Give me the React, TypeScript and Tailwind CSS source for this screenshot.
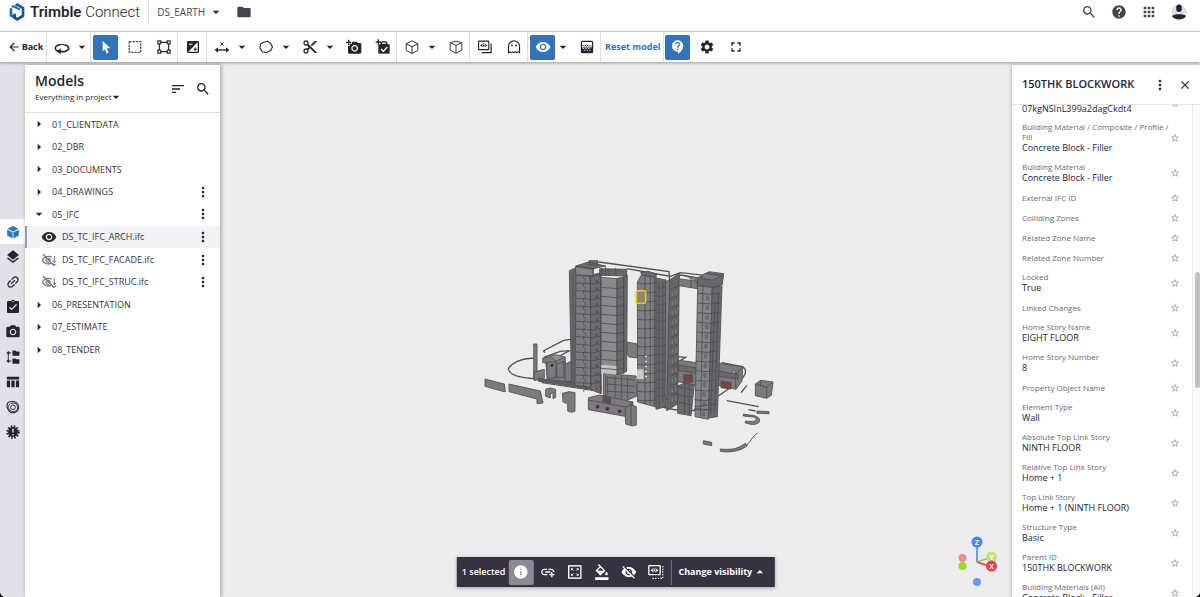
import type { ReactNode } from "react";
import {
  MdAddAPhoto,
  MdAddLink,
  MdApps,
  MdArrowBack,
  MdArrowDropDown,
  MdArrowDropUp,
  MdArrowRight,
  MdAssignmentTurnedIn,
  MdClose,
  MdContactSupport,
  MdContentCut,
  MdExposure,
  MdFolder,
  MdFormatColorFill,
  MdFullscreen,
  MdHelp,
  MdInfo,
  MdLayers,
  MdLink,
  MdMoreVert,
  MdPhotoCamera,
  MdSearch,
  MdSettings,
  MdSort,
  MdStarBorder,
  MdVisibility,
  MdVisibilityOff,
} from "react-icons/md";

/* ---------- custom icons ---------- */

type IconProps = { children: ReactNode; className?: string };

function Icon({ children, className = "size-3.5" }: IconProps) {
  return (
    <svg viewBox="0 0 24 24" className={className} fill="none" stroke="currentColor" strokeWidth={2} aria-hidden="true">
      {children}
    </svg>
  );
}

const OrbitIcon = () => (
  <Icon className="size-4">
    <path d="M9 19c-4-.5-7-2.400-7-5C2 10.500 6 9 9 8.500M17 9c3 .8 5 2.300 5 5 0 2.500-3 4.300-7 5H8" strokeWidth={2.400} />
    <path d="M10 14v9l-6-4.500z" fill="currentColor" stroke="none" />
    <path d="M8 8.600c3-.5 6-.5 10 .6" strokeWidth={1.600} />
  </Icon>
);

const PointerIcon = () => (
  <Icon className="size-4">
    <path d="M7 3l11.500 11h-5.300l2.800 6.300-3 1.300-2.700-6.400L7 18.500z" fill="currentColor" stroke="none" />
  </Icon>
);

const MarqueeIcon = () => (
  <Icon>
    <rect x="2" y="3" width="20" height="18" strokeDasharray="4 1.600" strokeWidth={1.800} />
  </Icon>
);

const FrameIcon = () => (
  <Icon>
    <path d="M6 4h12M6 20h12M4 6v12M20 6v12" />
    {[
      [1.5, 1.5],
      [17.5, 1.5],
      [1.5, 17.5],
      [17.5, 17.5],
    ].map(([x, y]) => (
      <rect key={`${x}-${y}`} x={x} y={y} width="5" height="5" fill="#fff" />
    ))}
  </Icon>
);

const MeasureIcon = () => (
  <Icon className="size-4">
    <path d="M3 16.500h18" />
    <path d="M6 12.500L1 16.500l5 4zM18 12.500l5 4-5 4z" fill="currentColor" stroke="none" />
    <path d="M9.800 5l4.400 5M14.200 5l-4.400 5" strokeWidth={1.500} />
  </Icon>
);

const MarkupIcon = () => (
  <Icon>
    <path d="M8 4l7-2 5 4 3 6-3 6-7 3.500-7-1L1.500 14 3 7z" strokeWidth={1.900} strokeLinejoin="round" />
  </Icon>
);

const AddTodoIcon = () => (
  <Icon className="size-4">
    <path d="M5 8h17v14H5z" fill="currentColor" stroke="none" />
    <path d="M9 8a4.500 4 0 0 1 9 0zM1 4.500h8M5 .5v8" />
    <path d="M9 15l3.500 3.500 6-6.500" stroke="#fff" />
  </Icon>
);

const CubeIcon = () => (
  <Icon>
    <path d="M12 1.500l10 5v11.500L12 23 2 18V6.500zM2 6.500l10 5 10-5M12 11.500V23" strokeWidth={1.600} strokeLinejoin="round" />
  </Icon>
);

const ClipBoxIcon = () => (
  <Icon>
    <path d="M2 4.500l10-2.500 10 2.500v13L12 22.500 2 17.500zM2 4.500L12 9l10-4.500M12 9v13.500" strokeWidth={1.500} strokeLinejoin="round" />
  </Icon>
);

const ViewsIcon = () => (
  <Icon>
    <rect x="1" y="2" width="17.500" height="14.500" rx="1" />
    <path d="M22.500 6v15.500H6" />
    <path d="M3.500 9.200Q9.800 2.500 16 9.200 9.800 16 3.500 9.200z" fill="currentColor" stroke="none" />
    <circle cx="9.800" cy="9.200" r="2.200" strokeWidth={1.400} stroke="#fff" />
  </Icon>
);

const GhostIcon = () => (
  <Icon>
    <path d="M2.500 22V11a9.500 9.500 0 0 1 19 0v11l-2.500-2-2.300 2-2.300-2-2.400 2-2.300-2-2.400 2-2.300-2z" strokeWidth={1.900} />
    <circle cx="8.500" cy="9.500" r="1.600" fill="currentColor" stroke="none" />
    <circle cx="15.500" cy="9.500" r="1.600" fill="currentColor" stroke="none" />
  </Icon>
);

const TransparencyIcon = () => (
  <Icon>
    <rect x="2.500" y="2.500" width="19" height="19" rx="1.500" strokeWidth={2.200} />
    <path d="M3 13h18v8H3z" fill="currentColor" stroke="none" />
    <path d="M4 9.500h16M6 12h14" strokeDasharray="2 2" strokeWidth={1.800} />
    <path d="M5 14.500h14M7 17.500h12" stroke="#fff" strokeDasharray="2 2.500" strokeWidth={1.600} />
  </Icon>
);

const SolidCubeIcon = () => (
  <Icon>
    <path d="M12 1.500l9.500 4.800L12 11 2.500 6.300zM2 8l9.300 4.600V23L2 18zM22 8l-9.300 4.600V23L22 18z" fill="currentColor" stroke="none" />
  </Icon>
);

const HierarchyIcon = () => (
  <Icon>
    <path d="M4 2v20M1 5h8M1 19h8" strokeWidth={1.500} />
    <path d="M11 1h5l1.500 1.500H23V10H11zM11 14.500h5l1.500 1.500H23v7.500H11zM4 2l2.500 3L4 8 1.500 5zM4 16l2.500 3L4 22l-2.500-3z" fill="currentColor" stroke="none" />
  </Icon>
);

const TableIcon = () => (
  <Icon>
    <path d="M1.500 3h21v4.500h-21zM1.500 9.500h5.500V21H1.500zM9.200 9.500h5.600V21H9.200zM17 9.500h5.500V21H17z" fill="currentColor" stroke="none" />
  </Icon>
);

const ExtensionsIcon = () => (
  <Icon>
    <path d="M3 5c3-3.500 11-3 15-.5 4 3 4.500 9 2 13.500-2.500 4-9 5-13 2.500C3 17.500 0 10 3 5z" />
    <path d="M5 9c2-4 9-5 12.500-2 3 3 3 9 0 11.500-3.500 2.500-9 1.500-11-1.500S3.500 12 5 9z" strokeWidth={1.500} />
    <circle cx="12" cy="12.500" r="4" strokeWidth={1.500} />
  </Icon>
);

const ClashIcon = () => (
  <Icon>
    <circle cx="12" cy="12" r="8.500" fill="currentColor" stroke="none" />
    <circle cx="12" cy="12" r="9.500" strokeWidth={4} strokeDasharray="2.600 2.374" />
    <path d="M12 6.500v6.500M12 15.500v2.500" stroke="#e0e1e9" strokeWidth={2.400} />
  </Icon>
);

const HiddenModelIcon = () => (
  <Icon className="size-4">
    <path d="M3 3l17 18" />
    <path d="M2 12c2-3.500 5-5.500 9-5.500 2 0 4 .6 5 1.500M2 12c2 4 5 6 9 6 2 0 3-.3 4-.8" />
    <path d="M8 10c-1.500 3 1 6 4 5.500M11 9l3.500 3.500" />
    <path d="M20 6v10M17.500 13l2.500 3 2.500-3M16.500 18.500h6.500" strokeWidth={1.500} />
  </Icon>
);

const FitIcon = () => (
  <Icon>
    <rect x="1.500" y="1.500" width="21" height="21" strokeWidth={2.400} />
    <path d="M5.500 9.500v-4h4zM14.500 5.500h4v4zM18.500 14.500v4h-4zM9.500 18.500h-4v-4z" fill="currentColor" stroke="none" />
    <path d="M7 7l2.500 2.500M17 7l-2.500 2.500M7 17l2.500-2.500M17 17l-2.500-2.500" strokeWidth={1.600} />
  </Icon>
);

const IsolateIcon = () => (
  <Icon className="size-4">
    <rect x="1.500" y="2.500" width="17" height="13.500" rx="1" />
    <path d="M22.500 3v18.500H6" strokeDasharray="2 2" />
    <path d="M4 9.200Q10 3.500 16 9.200 10 15.200 4 9.200z" fill="currentColor" stroke="none" />
    <circle cx="10" cy="9.300" r="2" strokeWidth={1.400} stroke="#353341" />
  </Icon>
);

function TrimbleMark() {
  return (
    <svg viewBox="0 0 48 54" className="h-[18px] w-4" fill="none" strokeWidth={8} aria-hidden="true">
      <path d="M6 16v21l9 5" stroke="#1d67b3" />
      <path d="M8 11l6-1 19 10" stroke="#1d67b3" strokeWidth={6} />
      <path d="M20 8l5-3 17 10v12" stroke="#0f60ab" />
      <path d="M42 27v11L25 49l-8-5V32" stroke="#154f91" />
    </svg>
  );
}

/* ---------- building model ---------- */

const EDGE = "#4b4c50";
const range = (n: number) => Array.from({ length: n }, (_, i) => i);

function BuildingModel() {
  return (
    <svg viewBox="0 0 930 630" className="h-[210px] w-[310px] shrink-0" role="img" aria-label="Building model">
      <g fill="none" stroke="#505154" strokeWidth={4}>
        <path d="M178 325c-35-3-70 15-78 32 4 22 55 30 82 28M286 268l-20 3-60 31 3 6M206 322l50-18 28-2-30 16M372 36l210 29 2 35M455 56l125 22M584 80l32-12 75 8M584 95l34-20 60 12" />
        <path d="M600 320l32 2-26 16M740 338l62 12c16 10 12 25-10 45M790 396l-60 42M816 406l-18 22M755 452l96 18M820 479l22 4M520 455c60 30 150 38 200 10" />
        <path d="M190 390l190 28M200 398l170 26M848 549c-16 8-20 30-44 44" strokeWidth={3} />
      </g>

      <g fill="#7b7b7e" stroke={EDGE} strokeWidth={2.500} strokeLinejoin="round">
        {/* low walls at the left */}
        <path d="M176 282h10v106h-10zM30 387l58 15 3 23-8-1-53-15zM102 402l94 21 8 36-18 2v-14l-84-22zM212 418l14-4 16 4v24l-8 4v-18l-8 4v12l-14-5zM262 430l20-5 18 3v56l-10 3-12-4v-22l-14-5z" />
        <path d="M203 325l38-9 30 7v20l30-15v75l-52-5-32-8-4-50-10-3z" />
        <path d="M216 336h27v48h-27zM245 343l22-9v48h-22zM270 343l27-11v62h-27zM178 366l30-8v26l-30 8z" />
        <path d="M225 318l16-4 30 7-28 12z" fill="#929294" />
        <circle cx="231" cy="346" r="4" fill="#252529" />
        <path d="M190 385l188 23v14l-188-28z" fill="#5f5f62" />

        {/* podium */}
        <path d="M385 370l98 8 3 60-34 15-67-10zM455 276l32 6v42l-25-3-7-10z" />
        <path d="M395 382l85 8M395 402l86 7M395 424l86 4M420 372v70M440 375v70M458 380v65M398 380v62" />
        <path d="M340 443l34-8 100 21v38l-18 6-116-21z" />
        <path d="M340 450l116 22 18-16M456 472v28" fill="none" />
        <path d="M450 474l18-10 16 6v55l-12 3-20-6z" />
        <path d="M468 464v62" />
        <path d="M384 439l22 3v18l-22-4z" fill="#774638" />
        <circle cx="368" cy="470" r="5" fill="#343438" />
        <circle cx="397" cy="476" r="5" fill="#343438" />
        <circle cx="434" cy="484" r="5" fill="#343438" />

        {/* right wing */}
        <path d="M606 330l60 8v70l-60-14zM725 338l78 13-2 42-18 25-62-14z" />
        <path d="M610 345l180 28v14l-180-25zM782 373l20-21M782 373v42" fill="#6a6a6e" />
        <path d="M626 374h26v23h-26zM738 393l30 5v19l-30-4z" fill="#774638" />
        <circle cx="777" cy="366" r="4" fill="#e9e9ea" />
        <path d="M841 402l16-11 37 5-5 40-14 9-34-8z" />
        <path d="M857 391v16l18 5 19-16M875 412v32M841 402l16 5" fill="none" />
        <path d="M685 572l25 5v10l-25-5zM736 597c40 4 55-3 75-17l6 7c-20 16-50 22-81 17zM846 483l36 2v6l-36-1zM805 492l18 3c25 1 36 12 29 22-12 10-25 7-42 1l2-5c30 5 38-4 25-12l-32-3z" />
      </g>

      {/* west tower */}
      <g fill="#7b7b7e" stroke={EDGE} strokeWidth={2.500} strokeLinejoin="round">
        <path d="M283 62l25-11v350l-19-5z" fill="#66666b" />
        <path d="M303 50l52 4v360l-55-9z" />
        <path d="M345 76l33-8v363l-30-12z" fill="#6c6c70" />
        <path d="M302 48l38-12 52 12-38 8zM342 32h27v14l-27-2z" fill="#6a6a6e" />
        <path d="M374 56l81 2v20l-81-2zM380 54v24M392 50v28M402 56v22M422 54v22" fill="#66666a" />
        <path d="M302 50l52 8v20l-52-4z" fill="#858587" />
        {range(15).map((i) => (
          <g key={i}>
            <path d={`M303 ${76 + i * 23}l52 3M355 ${79 + i * 23}l22-5`} />
            <path d={`M326 ${78 + i * 23}v8l6 3v7l-6 3v5`} fill="none" strokeWidth={2} />
            <path d={`M362 ${90 + i * 23}h6v8h-6z`} fill="#505055" stroke="none" />
          </g>
        ))}
        <path d="M294 70v326" stroke="#56566a" />
        <path d="M347 78v334M376 74v350" />
        <path d="M378 82l48 4v288l-48-32z" fill="#8a8a8c" />
        <path d="M426 86l20-6v290l-20 2zM446 82l11-6-2 288-9 4z" fill="#69696d" />
        <path d="M380 344l44 4v26l-44-5z" fill="#c4c4c5" stroke="none" />
        {range(10).map((i) => (
          <path key={i} d={`M378 ${112 + i * 27}l48 4 20-4`} fill="none" />
        ))}
        <path d="M378 372v60M392 376v64" />
      </g>

      {/* central tower */}
      <g fill="#7e7e81" stroke={EDGE} strokeWidth={2.500} strokeLinejoin="round">
        <path d="M487 96l16-28 40 3v400l-55-15z" />
        <path d="M497 68l22-4 27 8-8 10-36-6z" fill="#6b6b6f" />
        <path d="M543 84l30 6v380l-30 8z" fill="#68686c" />
        <path d="M572 96l13-8-7 364-8-10z" />
        <path d="M584 90l29-20-5 392-33 20z" fill="#66666a" />
        {range(14).map((i) => (
          <g key={i}>
            <path d={`M487 ${100 + i * 27}l24 2 32-3`} fill="none" />
            <path d={`M544 ${112 + i * 25}l12 3 16-5`} fill="none" strokeWidth={2} />
          </g>
        ))}
        {range(12).map((i) => (
          <g key={i}>
            <path d={`M584 ${118 + i * 29}l25-9`} />
            <path d={`M589 ${125 + i * 29}l5-2v15l-5 2zM600 ${121 + i * 29}l5-2v15l-5 2z`} fill="#8e8e92" strokeWidth={1.500} />
          </g>
        ))}
        <path d="M510 75v387M526 74v390M538 78v390M552 94v380M564 97v360" fill="none" />
        <path d="M486 358h20v29h-20z" fill="#cbcbcc" stroke="none" />
        {range(5).map((i) => (
          <path key={i} d={`M510 ${317 + i * 15}h6v5h-6z`} fill="#dedede" stroke="none" />
        ))}
      </g>
      <rect x="484" y="122" width="28" height="38" rx="4" fill="#8d8866" stroke="#f4c51a" strokeWidth={4.500} />

      {/* east tower */}
      <g fill="#7b7b7e" stroke={EDGE} strokeWidth={2.500} strokeLinejoin="round">
        <path d="M612 86l55 8v22l-55-9zM624 76l44 7v14M648 80v34" />
        <path d="M668 84l34-19 44 6-4 33-30 10-46-8z" fill="#68686c" />
        <path d="M690 70l50 8-28 12-36-6z" />
        <path d="M668 108l44 4-12 396-40-8z" fill="#858587" />
        <path d="M712 112l29-4-14 392-27 4z" fill="#68686c" />
        {range(13).map((i) => (
          <g key={i}>
            <path d={`M${669 - i} ${130 + i * 29}l${43 - i} 3 24-4`} fill="none" />
            <ellipse cx={698 - i} cy={144 + i * 29} rx="4" ry="7" fill="#737376" strokeWidth={1.500} />
          </g>
        ))}
        <path d="M684 104l-7 396M720 154l-14 340M731 128l-12 360" fill="none" />
        <path d="M608 408l22-9 28 6-10 92-40-7z" fill="#69696d" />
        <path d="M609 410l45 12M609 434l43 8M609 456l41 8M629 400v92M643 406v89" />
        <path d="M658 470l70-8M665 476l50 4" />
      </g>
    </svg>
  );
}

function AxisGizmo() {
  return (
    <svg viewBox="0 0 44 52" className="h-13 w-11" role="img" aria-label="View axes">
      <g fill="none" strokeWidth={1.800}>
        <path d="M20 26V6" stroke="#5b94ee" />
        <path d="M20 26l15-5" stroke="#9bd32c" />
        <path d="M20 26l15 5" stroke="#e83c4c" />
      </g>
      <circle cx="5.500" cy="22" r="4" fill="#e88c98" />
      <circle cx="5.500" cy="30" r="4" fill="#98dc28" />
      <circle cx="20" cy="46" r="4" fill="#629bf3" />
      <circle cx="20" cy="6" r="5.500" fill="#4487f5" />
      <circle cx="34.500" cy="21" r="5.500" fill="#bde574" />
      <circle cx="34.500" cy="30" r="5.500" fill="#e93e4c" />
      <g fill="#fff" fontFamily="Liberation Sans, sans-serif" fontSize="7" fontWeight="700" textAnchor="middle">
        <text x="20" y="8.500">Z</text>
        <text x="34.500" y="23.500">Y</text>
        <text x="34.500" y="32.500">X</text>
      </g>
    </svg>
  );
}

/* ---------- toolbar ---------- */

function Tool({ label, active = false, children }: { label: string; active?: boolean; children: ReactNode }) {
  return (
    <button
      type="button"
      aria-label={label}
      aria-pressed={active}
      className={`flex size-[25px] items-center justify-center rounded-xs ${active ? "bg-[#3273b9] text-white" : ""}`}
    >
      {children}
    </button>
  );
}

function SplitTool({ label, active = false, children }: { label: string; active?: boolean; children: ReactNode }) {
  return (
    <div className="flex items-center">
      <Tool label={label} active={active}>
        {children}
      </Tool>
      <button type="button" aria-label={`${label} options`} className="flex h-[25px] w-[15px] items-center justify-center">
        <MdArrowDropDown className="size-4 shrink-0" />
      </button>
    </div>
  );
}

function ToolGroup({ children }: { children: ReactNode }) {
  return <div className="flex h-full items-center gap-1 border-r border-[#dddde2] pr-px pl-0.5">{children}</div>;
}

function Toolbar() {
  return (
    <div role="toolbar" className="z-20 flex h-[31px] shrink-0 items-center border-t border-[#cfcfd6] bg-white shadow-[0_1px_3px_rgba(0,0,0,0.35)]">
      <button type="button" className="flex h-full w-[47px] items-center justify-center gap-px border-r border-[#dddde2] pl-1 text-[9px] font-bold">
        <MdArrowBack className="size-3.5" />
        Back
      </button>
      <ToolGroup>
        <SplitTool label="Orbit">
          <OrbitIcon />
        </SplitTool>
      </ToolGroup>
      <ToolGroup>
        <Tool label="Select" active>
          <PointerIcon />
        </Tool>
        <Tool label="Rectangle select">
          <MarqueeIcon />
        </Tool>
        <Tool label="Area select">
          <FrameIcon />
        </Tool>
      </ToolGroup>
      <ToolGroup>
        <Tool label="Invert selection">
          <MdExposure className="size-4" />
        </Tool>
      </ToolGroup>
      <ToolGroup>
        <SplitTool label="Measure">
          <MeasureIcon />
        </SplitTool>
        <SplitTool label="Markup">
          <MarkupIcon />
        </SplitTool>
        <SplitTool label="Clip">
          <MdContentCut className="size-4" />
        </SplitTool>
        <Tool label="Add view">
          <MdAddAPhoto className="size-4" />
        </Tool>
        <Tool label="Add to-do">
          <AddTodoIcon />
        </Tool>
      </ToolGroup>
      <ToolGroup>
        <SplitTool label="Standard view">
          <CubeIcon />
        </SplitTool>
        <Tool label="Perspective">
          <ClipBoxIcon />
        </Tool>
      </ToolGroup>
      <ToolGroup>
        <Tool label="Views">
          <ViewsIcon />
        </Tool>
        <Tool label="Ghost mode">
          <GhostIcon />
        </Tool>
      </ToolGroup>
      <ToolGroup>
        <SplitTool label="Visibility" active>
          <MdVisibility className="size-4" />
        </SplitTool>
        <Tool label="Transparency">
          <TransparencyIcon />
        </Tool>
      </ToolGroup>
      <ToolGroup>
        <button type="button" className="px-0.5 text-[9px] font-bold whitespace-nowrap text-[#2e75bd]">
          Reset model
        </button>
      </ToolGroup>
      <div className="flex items-center gap-1 pl-px">
        <Tool label="Assistance" active>
          <MdContactSupport className="size-4" />
        </Tool>
        <Tool label="Settings">
          <MdSettings className="size-4" />
        </Tool>
        <Tool label="Full screen">
          <MdFullscreen className="size-4" />
        </Tool>
      </div>
    </div>
  );
}

/* ---------- header ---------- */

function Header() {
  return (
    <header className="flex h-[31px] shrink-0 items-center bg-white pb-2 text-[#46454f]">
      <a href="#home" className="flex h-6 items-center gap-[5px] border-r border-[#dddde2] pr-2 pl-[9px] text-[#252432]">
        <TrimbleMark />
        <span className="pt-px font-[Roboto,sans-serif] text-[15px] whitespace-nowrap">
          <span className="font-semibold">Trimble</span> <span className="font-light">Connect</span>
        </span>
      </a>
      <button type="button" className="flex items-center gap-[3px] pt-px pl-2 text-[10px]">
        DS_EARTH
        <MdArrowDropDown className="size-4 text-[#252432]" />
      </button>
      <button type="button" aria-label="Project files" className="ml-3">
        <MdFolder className="size-4" />
      </button>
      <div className="ml-auto flex items-center gap-3.5 pr-[13px]">
        <button type="button" aria-label="Search">
          <MdSearch className="size-4" />
        </button>
        <button type="button" aria-label="Help">
          <MdHelp className="size-4" />
        </button>
        <button type="button" aria-label="Apps">
          <MdApps className="size-4" />
        </button>
        <button type="button" aria-label="Account" className="text-[#252432]">
          <svg viewBox="0 0 32 32" className="size-4" aria-hidden="true">
            <circle cx="16" cy="16" r="15" fill="#dedee4" />
            <rect x="10.500" y="1" width="11" height="15" rx="5.500" fill="currentColor" />
            <path d="M2 24c4-5 24-5 28 0-4 9-24 9-28 0z" fill="currentColor" />
          </svg>
        </button>
      </div>
    </header>
  );
}

/* ---------- left side ---------- */

const railItems: { label: string; icon: ReactNode; active?: boolean }[] = [
  { label: "Models", icon: <SolidCubeIcon />, active: true },
  { label: "Layers", icon: <MdLayers className="size-4" /> },
  { label: "Links", icon: <MdLink className="size-4 -rotate-45" /> },
  { label: "To-dos", icon: <MdAssignmentTurnedIn className="size-4" /> },
  { label: "Views", icon: <MdPhotoCamera className="size-4" /> },
  { label: "Hierarchy", icon: <HierarchyIcon /> },
  { label: "Data table", icon: <TableIcon /> },
  { label: "Extensions", icon: <ExtensionsIcon /> },
  { label: "Clashes", icon: <ClashIcon /> },
];

function Rail() {
  return (
    <nav aria-label="Viewer panels" className="flex w-[25px] shrink-0 flex-col bg-[#e0e1e9] pt-[157px]">
      {railItems.map((item) => (
        <button
          key={item.label}
          type="button"
          aria-label={item.label}
          className={`flex h-[25px] w-full items-center justify-center ${item.active ? "bg-white text-[#2e75bd]" : ""}`}
        >
          {item.icon}
        </button>
      ))}
    </nav>
  );
}

type Node = { name: string; menu?: boolean; open?: boolean; file?: "shown" | "hidden" };

const nodes: Node[] = [
  { name: "01_CLIENTDATA" },
  { name: "02_DBR" },
  { name: "03_DOCUMENTS" },
  { name: "04_DRAWINGS", menu: true },
  { name: "05_IFC", menu: true, open: true },
  { name: "DS_TC_IFC_ARCH.ifc", menu: true, file: "shown" },
  { name: "DS_TC_IFC_FACADE.ifc", menu: true, file: "hidden" },
  { name: "DS_TC_IFC_STRUC.ifc", menu: true, file: "hidden" },
  { name: "06_PRESENTATION" },
  { name: "07_ESTIMATE" },
  { name: "08_TENDER" },
];

function TreeRow({ node }: { node: Node }) {
  const shown = node.file === "shown";
  return (
    <li className={`flex items-center border-l-2 pr-[9px] ${shown ? "border-[#9b9ba8] bg-[#f1f1f6]" : "border-transparent"}`}>
      {node.file ? (
        <button type="button" aria-label={`Toggle ${node.name}`} className="mr-[5px] ml-[14px]">
          {shown ? (
            <MdVisibility className="size-4" />
          ) : (
            <span className="text-[#76757f]">
              <HiddenModelIcon />
            </span>
          )}
        </button>
      ) : (
        <button type="button" aria-label={`Expand ${node.name}`} className="mr-[5px] ml-1">
          {node.open ? <MdArrowDropDown className="size-4" /> : <MdArrowRight className="size-4" />}
        </button>
      )}
      <span className="flex-1 text-[9px] whitespace-nowrap text-[#353440]">{node.name}</span>
      {node.menu && (
        <button type="button" aria-label={`${node.name} menu`}>
          <MdMoreVert className="size-4" />
        </button>
      )}
    </li>
  );
}

function ModelsPanel() {
  return (
    <aside className="z-10 mt-[3px] w-[195px] shrink-0 bg-white shadow-[1px_0_4px_rgba(0,0,0,0.35)]">
      <div className="flex h-12 items-center border-b border-[#dddde2] pr-[9px] pl-2.5">
        <div className="flex-1">
          <h1 className="text-[14px] leading-4 font-semibold">Models</h1>
          <button type="button" className="flex items-center text-[8px] leading-4">
            Everything in project
            <MdArrowDropDown className="-ml-1 size-4" />
          </button>
        </div>
        <button type="button" aria-label="Sort" className="mr-[9px]">
          <MdSort className="size-4" />
        </button>
        <button type="button" aria-label="Search models">
          <MdSearch className="size-4" />
        </button>
      </div>
      <ul className="grid h-62 auto-rows-fr">
        {nodes.map((node) => (
          <TreeRow key={node.name} node={node} />
        ))}
      </ul>
    </aside>
  );
}

/* ---------- properties ---------- */

const properties: { label: string; value?: string }[] = [
  { label: "Building Material / Composite / Profile / Fill", value: "Concrete Block - Filler" },
  { label: "Building Material", value: "Concrete Block - Filler" },
  { label: "External IFC ID" },
  { label: "Colliding Zones" },
  { label: "Related Zone Name" },
  { label: "Related Zone Number" },
  { label: "Locked", value: "True" },
  { label: "Linked Changes" },
  { label: "Home Story Name", value: "EIGHT FLOOR" },
  { label: "Home Story Number", value: "8" },
  { label: "Property Object Name" },
  { label: "Element Type", value: "Wall" },
  { label: "Absolute Top Link Story", value: "NINTH FLOOR" },
  { label: "Relative Top Link Story", value: "Home + 1" },
  { label: "Top Link Story", value: "Home + 1 (NINTH FLOOR)" },
  { label: "Structure Type", value: "Basic" },
  { label: "Parent ID", value: "150THK BLOCKWORK" },
  { label: "Building Materials (All)", value: "Concrete Block - Filler" },
];

function StarButton({ label }: { label: string }) {
  return (
    <button type="button" aria-label={`Favourite ${label}`} className="flex text-[#9a9aa5]">
      <MdStarBorder className="size-2.5" />
    </button>
  );
}

function PropertiesPanel() {
  return (
    <aside className="z-10 mt-[3px] flex w-[188px] shrink-0 flex-col overflow-hidden bg-white shadow-[-1px_0_3px_rgba(0,0,0,0.2)]">
      <div className="flex h-10 shrink-0 items-center border-b border-[#e4e4e9] pr-2 pl-2.5">
        <h2 className="flex-1 text-[11px] font-semibold whitespace-nowrap">150THK BLOCKWORK</h2>
        <button type="button" aria-label="Object menu" className="mr-2.5">
          <MdMoreVert className="size-4" />
        </button>
        <button type="button" aria-label="Close">
          <MdClose className="size-3.5" />
        </button>
      </div>
      <div className="flex min-h-0 flex-1">
        <dl className="min-w-0 flex-1 overflow-hidden pr-3 pl-2.5">
          <div className="flex h-[13px] items-start justify-between">
            <dd className="text-[9px] leading-2 text-[#252432]">07kgNSInL399a2dagCkdt4</dd>
            <div className="-mt-[7px]">
              <StarButton label="GUID" />
            </div>
          </div>
          {properties.map((p) => (
            <div key={p.label} className="flex items-center justify-between py-1">
              <div className="w-[147px]">
                <dt className={`text-[8px] text-[#6a6976] ${p.value ? "leading-[10px]" : "leading-3"}`}>{p.label}</dt>
                {p.value && <dd className="text-[9px] leading-3 text-[#252432]">{p.value}</dd>}
              </div>
              <StarButton label={p.label} />
            </div>
          ))}
        </dl>
        <div className="w-2 shrink-0 border-l border-[#ececef] bg-[#fafafa] pt-[167px]">
          <div className="ml-0.5 h-[116px] w-[5px] rounded-full bg-[#c1c1c3]" />
        </div>
      </div>
    </aside>
  );
}

/* ---------- selection bar ---------- */

function SelectionBar() {
  const item = "flex size-[25px] items-center justify-center rounded-xs";
  return (
    <div className="absolute bottom-2.5 left-1/2 flex h-[30px] -translate-x-1/2 items-center bg-[#353341] pr-[7px] pl-[5px] text-white shadow-[0_1px_4px_rgba(0,0,0,0.3)]">
      <span className="mr-[3px] text-[9px] font-semibold whitespace-nowrap">1 selected</span>
      <div className="flex items-center gap-0.5">
        <button type="button" aria-label="Properties" aria-pressed="true" className={`${item} bg-[#8c8a96]`}>
          <MdInfo className="size-4" />
        </button>
        <button type="button" aria-label="Attach link" className={item}>
          <MdAddLink className="size-4" />
        </button>
        <button type="button" aria-label="Fit to view" className={item}>
          <FitIcon />
        </button>
        <button type="button" aria-label="Colour" className={item}>
          <MdFormatColorFill className="size-4" />
        </button>
        <button type="button" aria-label="Hide" className={item}>
          <MdVisibilityOff className="size-4" />
        </button>
        <button type="button" aria-label="Isolate" className={item}>
          <IsolateIcon />
        </button>
      </div>
      <button type="button" className="ml-0.5 flex h-[25px] items-center border-l border-[#777584] pl-[7px] text-[9px] font-bold whitespace-nowrap">
        Change visibility
        <MdArrowDropUp className="size-4" />
      </button>
    </div>
  );
}

export default function App() {
  return (
    <div className="bg-black">
      <div className="flex h-screen flex-col overflow-hidden rounded-b-md bg-white font-['Open_Sans',sans-serif] text-[#252432]">
        <Header />
        <Toolbar />
        <div className="flex min-h-0 flex-1 bg-[#ececec]">
          <Rail />
          <ModelsPanel />
          <main className="relative flex min-w-0 flex-1 items-center justify-center pt-[50px] pl-7">
            <BuildingModel />
            <SelectionBar />
            <div className="absolute right-[11px] bottom-[9px]">
              <AxisGizmo />
            </div>
          </main>
          <PropertiesPanel />
        </div>
      </div>
    </div>
  );
}
